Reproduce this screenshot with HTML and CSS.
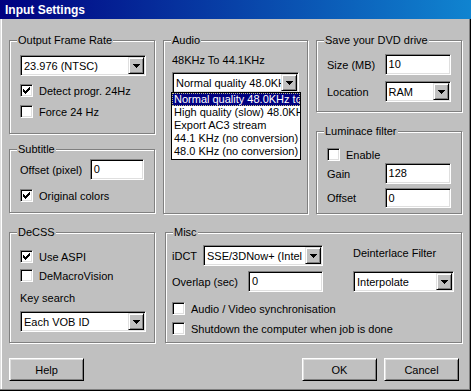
FILE: index.html
```html
<!DOCTYPE html>
<html lang="en">
<head>
    <meta charset="UTF-8">
    <title>Input Settings</title>
    <link rel="stylesheet" href="styles.css">
</head>
<body>
    <div class="window">
        <div class="titlebar">Input Settings</div>

        <div class="client">
            <div class="groups-top">
                <!-- left column -->
                <div class="col">
                    <fieldset class="grp grp-fps">
                        <legend>Output Frame Rate</legend>
                        <div class="grp-body pad-10">
                            <div class="combo combo-fps">
                                <span class="combo-text">23.976 (NTSC)</span>
                                <span class="combo-btn"><svg width="7" height="4" viewBox="0 0 7 4"><path d="M0 0h7v1h-1v1h-1v1h-1v1h-1v-1h-1v-1h-1v-1h-1z"/></svg></span>
                            </div>
                            <div class="check mt-8">
                                <span class="box"><svg width="7" height="7" viewBox="0 0 7 7"><path d="M6 0h1v1h-1zM5 1h2v1h-2zM0 2h1v1h-1zM4 2h3v1h-3zM0 3h2v1h-2zM3 3h3v1h-3zM0 4h5v1h-5zM1 5h3v1h-3zM2 6h1v1h-1z"/></svg></span>
                                Detect progr. 24Hz
                            </div>
                            <div class="check mt-8">
                                <span class="box"></span>
                                Force 24 Hz
                            </div>
                        </div>
                    </fieldset>

                    <fieldset class="grp grp-subtitle">
                        <legend>Subtitle</legend>
                        <div class="grp-body pad-10">
                            <div class="field-row sub-row">
                                <span class="lbl lbl-sub">Offset (pixel)</span>
                                <span class="edit edit-sub">0</span>
                            </div>
                            <div class="check sub-check">
                                <span class="box"><svg width="7" height="7" viewBox="0 0 7 7"><path d="M6 0h1v1h-1zM5 1h2v1h-2zM0 2h1v1h-1zM4 2h3v1h-3zM0 3h2v1h-2zM3 3h3v1h-3zM0 4h5v1h-5zM1 5h3v1h-3zM2 6h1v1h-1z"/></svg></span>
                                Original colors
                            </div>
                        </div>
                    </fieldset>
                </div>

                <!-- middle column -->
                <div class="col">
                    <fieldset class="grp grp-audio">
                        <legend>Audio</legend>
                        <div class="grp-body pad-8">
                            <div class="audio-lbl">48KHz To 44.1KHz</div>
                            <div class="combo combo-audio">
                                <span class="combo-text">Normal quality 48.0KHz to 44.1KHz</span>
                                <span class="combo-btn"><svg width="7" height="4" viewBox="0 0 7 4"><path d="M0 0h7v1h-1v1h-1v1h-1v1h-1v-1h-1v-1h-1v-1h-1z"/></svg></span>
                                <ul class="droplist">
                                    <li class="selected">Normal quality 48.0KHz to 44.1KHz</li>
                                    <li>High quality (slow) 48.0KHz to 44.1KHz</li>
                                    <li>Export AC3 stream</li>
                                    <li>44.1 KHz (no conversion)</li>
                                    <li>48.0 KHz (no conversion)</li>
                                </ul>
                            </div>
                        </div>
                    </fieldset>
                </div>

                <!-- right column -->
                <div class="col">
                    <fieldset class="grp grp-dvd">
                        <legend>Save your DVD drive</legend>
                        <div class="grp-body pad-10">
                            <div class="field-row dvd-row1">
                                <span class="lbl lbl-right">Size (MB)</span>
                                <span class="edit edit-right">10</span>
                            </div>
                            <div class="field-row dvd-row2">
                                <span class="lbl lbl-right">Location</span>
                                <div class="combo combo-right">
                                    <span class="combo-text">RAM</span>
                                    <span class="combo-btn"><svg width="7" height="4" viewBox="0 0 7 4"><path d="M0 0h7v1h-1v1h-1v1h-1v1h-1v-1h-1v-1h-1v-1h-1z"/></svg></span>
                                </div>
                            </div>
                        </div>
                    </fieldset>

                    <fieldset class="grp grp-lum">
                        <legend>Luminace filter</legend>
                        <div class="grp-body pad-10">
                            <div class="check lum-check">
                                <span class="box"></span>
                                Enable
                            </div>
                            <div class="field-row lum-row1">
                                <span class="lbl lbl-right">Gain</span>
                                <span class="edit edit-right">128</span>
                            </div>
                            <div class="field-row lum-row2">
                                <span class="lbl lbl-right">Offset</span>
                                <span class="edit edit-right">0</span>
                            </div>
                        </div>
                    </fieldset>
                </div>
            </div>

            <div class="groups-bottom">
                <fieldset class="grp grp-decss">
                    <legend>DeCSS</legend>
                    <div class="grp-body pad-10">
                        <div class="check decss-check1">
                            <span class="box"><svg width="7" height="7" viewBox="0 0 7 7"><path d="M6 0h1v1h-1zM5 1h2v1h-2zM0 2h1v1h-1zM4 2h3v1h-3zM0 3h2v1h-2zM3 3h3v1h-3zM0 4h5v1h-5zM1 5h3v1h-3zM2 6h1v1h-1z"/></svg></span>
                            Use ASPI
                        </div>
                        <div class="check decss-check2">
                            <span class="box"></span>
                            DeMacroVision
                        </div>
                        <div class="key-lbl">Key search</div>
                        <div class="combo combo-key">
                            <span class="combo-text">Each VOB ID</span>
                            <span class="combo-btn"><svg width="7" height="4" viewBox="0 0 7 4"><path d="M0 0h7v1h-1v1h-1v1h-1v1h-1v-1h-1v-1h-1v-1h-1z"/></svg></span>
                        </div>
                    </div>
                </fieldset>

                <fieldset class="grp grp-misc">
                    <legend>Misc</legend>
                    <div class="grp-body pad-6">
                        <div class="misc-row misc-row1">
                            <div class="misc-left">
                                <span class="lbl lbl-idct">iDCT</span>
                                <div class="combo combo-idct">
                                    <span class="combo-text">SSE/3DNow+ (Intel IDCT)</span>
                                    <span class="combo-btn"><svg width="7" height="4" viewBox="0 0 7 4"><path d="M0 0h7v1h-1v1h-1v1h-1v1h-1v-1h-1v-1h-1v-1h-1z"/></svg></span>
                                </div>
                            </div>
                            <span class="lbl deint-lbl">Deinterlace Filter</span>
                        </div>
                        <div class="misc-row misc-row2">
                            <div class="misc-left">
                                <span class="lbl lbl-overlap">Overlap (sec)</span>
                                <span class="edit edit-overlap">0</span>
                            </div>
                            <div class="combo combo-deint">
                                <span class="combo-text">Interpolate</span>
                                <span class="combo-btn"><svg width="7" height="4" viewBox="0 0 7 4"><path d="M0 0h7v1h-1v1h-1v1h-1v1h-1v-1h-1v-1h-1v-1h-1z"/></svg></span>
                            </div>
                        </div>
                        <div class="check misc-check1">
                            <span class="box"></span>
                            Audio / Video synchronisation
                        </div>
                        <div class="check misc-check2">
                            <span class="box"></span>
                            Shutdown the computer when job is done
                        </div>
                    </div>
                </fieldset>
            </div>

            <div class="buttons">
                <button class="btn">Help</button>
                <div class="btn-right">
                    <button class="btn">OK</button>
                    <button class="btn">Cancel</button>
                </div>
            </div>
        </div>
    </div>
</body>
</html>
```

FILE: styles.css
```css
/* Classic Win9x dialog look */
body {
    margin: 0;
    font-family: "Liberation Sans", Arial, sans-serif;
    font-size: 11px;
    color: #000;
    background: #c0c0c0;
}

.window {
    width: 471px;
    height: 391px;
    box-sizing: border-box;
    background: #c0c0c0;
    box-shadow: inset -1px -1px 0 #000, inset -2px -2px 0 #808080,
                inset 1px 0 0 #dfdfdf, inset 2px 0 0 #fff;
}

.titlebar {
    height: 19px;
    line-height: 20px;
    padding-left: 5px;
    background: linear-gradient(to right, #000080, #1084d0);
    color: #fff;
    font-weight: bold;
    font-size: 12px;
}

.client {
    padding: 15px 0 0 9px;
}

.groups-top {
    display: grid;
    grid-template-columns: 146px 145px 146px;
    column-gap: 8px;
    height: 180px;
}

.col {
    display: flex;
    flex-direction: column;
}

.groups-bottom {
    display: grid;
    grid-template-columns: 146px 297px;
    column-gap: 10px;
    margin-top: 12px;
    height: 117px;
}

/* group boxes */
.grp {
    margin: 0;
    padding: 0;
    min-width: 0;
    box-sizing: border-box;
    border: 1px solid #808080;
    box-shadow: inset 1px 1px 0 #fff, 1px 1px 0 #fff;
}

.grp legend {
    margin-left: 7px;
    padding: 0 1px;
    line-height: 13px;
    background: #c0c0c0;
}

.pad-10 { padding: 0 10px; }
.pad-8 { padding: 0 8px; }
.pad-6 { padding: 0 6px; }

.grp-fps { height: 100px; }
.grp-subtitle { height: 70px; margin-top: 9px; }
.grp-audio { height: 180px; }
.grp-dvd { height: 78px; }
.grp-lum { height: 89px; margin-top: 13px; }
.grp-decss { height: 117px; }
.grp-misc { height: 117px; }

/* sunken edit */
.edit {
    display: block;
    box-sizing: border-box;
    height: 21px;
    padding: 2px 0 0 3px;
    line-height: 15px;
    background: #fff;
    border: 1px solid;
    border-color: #808080 #fff #fff #808080;
    box-shadow: inset 1px 1px 0 #000, inset -1px -1px 0 #dfdfdf;
}

/* combo box */
.combo {
    position: relative;
    display: flex;
    box-sizing: border-box;
    height: 21px;
    padding: 2px;
    background: #fff;
    border: 1px solid;
    border-color: #808080 #fff #fff #808080;
    box-shadow: inset 1px 1px 0 #000, inset -1px -1px 0 #dfdfdf;
}

.combo-text {
    flex: 1;
    overflow: hidden;
    white-space: nowrap;
    padding-left: 1px;
    line-height: 17px;
}

.combo-btn {
    width: 16px;
    height: 17px;
    margin: -1px -1px 0 0;
    box-sizing: border-box;
    display: flex;
    align-items: center;
    justify-content: center;
    background: #c0c0c0;
    border: 1px solid;
    border-color: #dfdfdf #000 #000 #dfdfdf;
    box-shadow: inset 1px 1px 0 #fff, inset -1px -1px 0 #808080;
}

.combo-btn svg {
    fill: #000;
    shape-rendering: crispEdges;
}

.combo-fps { width: 126px; margin-top: 8px; }
.combo-audio { width: 127px; margin-top: 5px; }
.combo-right { width: 68px; }
.combo-key { width: 126px; margin-top: 6px; }
.combo-idct { width: 120px; }
.combo-deint { width: 101px; }

/* open list of the audio combo */
.droplist {
    position: absolute;
    left: -2px;
    top: 19px;
    width: 130px;
    margin: 0;
    padding: 0 0 1px 0;
    box-sizing: border-box;
    list-style: none;
    background: #fff;
    border: 1px solid #000;
    z-index: 2;
}

.droplist li {
    height: 13px;
    line-height: 13px;
    padding-left: 2px;
    white-space: nowrap;
    overflow: hidden;
}

.droplist li.selected {
    background: #000080;
    color: #fff;
    outline: 1px dotted #c0c080;
    outline-offset: -1px;
}

/* checkboxes */
.check {
    display: flex;
    align-items: center;
    height: 13px;
    white-space: nowrap;
}

.box {
    width: 13px;
    height: 13px;
    margin-right: 6px;
    box-sizing: border-box;
    display: flex;
    align-items: center;
    justify-content: center;
    background: #fff;
    border: 1px solid;
    border-color: #808080 #fff #fff #808080;
    box-shadow: inset 1px 1px 0 #000, inset -1px -1px 0 #dfdfdf;
}

.box svg {
    fill: #000;
    shape-rendering: crispEdges;
}

.mt-8 { margin-top: 8px; }

/* label + field rows */
.field-row {
    display: flex;
    align-items: center;
}

.lbl {
    white-space: nowrap;
}

.lbl-sub { width: 71px; }
.edit-sub { width: 55px; }
.sub-row { margin-top: 3px; }
.sub-check { margin-top: 9px; }

.audio-lbl {
    margin-top: 7px;
    line-height: 13px;
}

.lbl-right { width: 59px; }
.edit-right { width: 68px; }
.dvd-row1 { margin-top: 7px; }
.dvd-row2 { margin-top: 6px; }

.lum-check { margin-top: 10px; }
.lum-row1 { margin-top: 2px; }
.lum-row2 { margin-top: 4px; }
.lum-row2 .edit { height: 20px; }

.decss-check1 { margin-top: 11px; }
.decss-check2 { margin-top: 6px; }
.key-lbl {
    margin-top: 10px;
    line-height: 13px;
}

/* misc group */
.misc-row {
    display: flex;
    align-items: center;
}

.misc-left {
    width: 181px;
    display: flex;
    align-items: center;
}

.misc-row1 { margin-top: 6px; }
.misc-row2 { margin-top: 5px; }
.lbl-idct { width: 31px; }
.lbl-overlap { width: 76px; }
.edit-overlap { width: 75px; }
.deint-lbl { margin-top: -6px; }
.misc-check1 { margin-top: 10px; }
.misc-check2 { margin-top: 7px; }

/* push buttons */
.buttons {
    display: flex;
    justify-content: space-between;
    width: 450px;
    margin-top: 15px;
}

.btn-right {
    display: flex;
    gap: 7px;
}

.btn {
    width: 75px;
    height: 23px;
    padding: 0;
    font-family: inherit;
    font-size: 11px;
    color: #000;
    background: #c0c0c0;
    border: 1px solid;
    border-color: #fff #000 #000 #fff;
    box-shadow: inset 1px 1px 0 #dfdfdf, inset -1px -1px 0 #808080;
    border-radius: 0;
}
```
